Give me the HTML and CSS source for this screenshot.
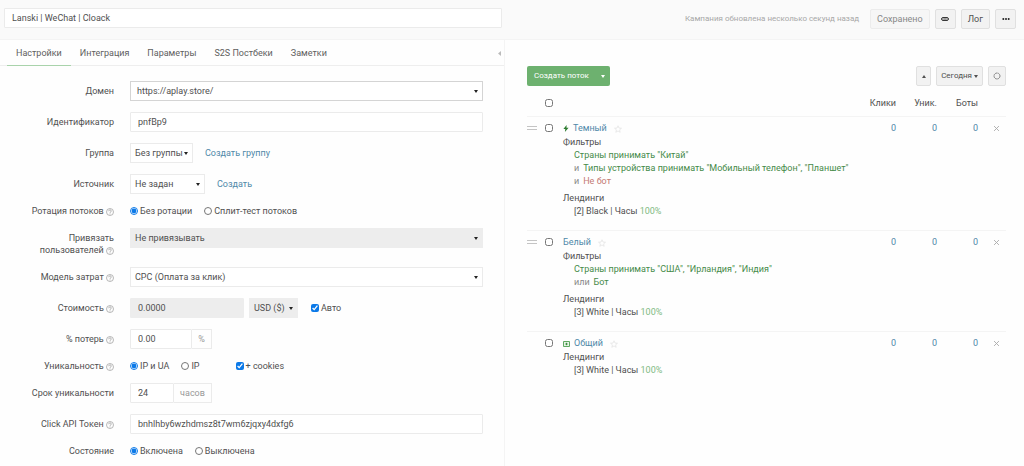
FILE: index.html
```html
<!DOCTYPE html>
<html lang="ru">
<head>
<meta charset="utf-8">
<meta name="viewport" content="width=device-width, initial-scale=1">
<title>Lanski | WeChat | Cloack</title>
<link rel="stylesheet" href="styles.css">
</head>
<body>
<svg class="sprite" aria-hidden="true">
  <symbol id="help" viewBox="0 0 16 16"><circle cx="8" cy="8" r="7" fill="none" stroke="currentColor" stroke-width="1.4"/><path d="M5.4 6.4c0-3.4 5.2-3.2 5.2-.3 0 1.6-2.6 1.8-2.6 3.6M8 11v1.8" fill="none" stroke="currentColor" stroke-width="1.6"/></symbol>
  <symbol id="star" viewBox="0 0 16 16"><path d="M8 1.5l2 4.6 5 .4-3.800 3.200 1.200 4.800L8 11.900l-4.400 2.600 1.200-4.800L1 6.500l5-.4z" fill="none" stroke="currentColor" stroke-width="1.2"/></symbol>
  <symbol id="close" viewBox="0 0 10 10"><path d="M1.500 1.500l7 7M8.500 1.500l-7 7" fill="none" stroke="currentColor" stroke-width="1.300"/></symbol>
  <symbol id="grip" viewBox="0 0 10 6"><path d="M0 1.500h10M0 4.500h10" stroke="currentColor" stroke-width="1"/></symbol>
</svg>

<header class="topbar">
  <input class="input topbar-name" type="text" aria-label="Название кампании" value="Lanski | WeChat | Cloack">
  <div class="topbar-actions">
    <span class="topbar-status">Кампания обновлена несколько секунд назад</span>
    <button class="btn btn-saved" type="button" disabled>Сохранено</button>
    <button class="btn btn-icon" type="button" aria-label="Ссылка"><svg width="8" height="4" viewBox="0 0 16 8"><rect x="1.200" y="1.200" width="13.600" height="5.600" rx="2.800" fill="none" stroke="currentColor" stroke-width="2"/><path d="M4.500 4h7" stroke="currentColor" stroke-width="1.400"/></svg></button>
    <button class="btn" type="button">Лог</button>
    <button class="btn btn-icon" type="button" aria-label="Ещё"><svg width="8" height="4" viewBox="0 0 8 4" fill="currentColor"><circle cx="1.300" cy="2" r="1"/><circle cx="4" cy="2" r="1"/><circle cx="6.700" cy="2" r="1"/></svg></button>
  </div>
</header>

<main class="columns">
  <section class="settings">
    <nav class="tabs">
      <a class="tab tab-active" href="#settings">Настройки</a>
      <a class="tab" href="#integration">Интеграция</a>
      <a class="tab" href="#params">Параметры</a>
      <a class="tab" href="#s2s">S2S Постбеки</a>
      <a class="tab" href="#notes">Заметки</a>
      <button class="collapse" type="button" aria-label="Свернуть"><svg width="3" height="5" viewBox="0 0 3 5"><path d="M3 0v5L0 2.500z" fill="currentColor"/></svg></button>
    </nav>

    <form class="form" id="settings">
      <div class="row">
        <label class="label" for="domain">Домен</label>
        <div class="field"><span class="select select-wide select-domain"><select id="domain"><option>https://aplay.store/</option></select></span></div>
      </div>
      <div class="row">
        <label class="label" for="alias">Идентификатор</label>
        <div class="field"><input class="input input-wide" id="alias" type="text" value="pnfBp9"></div>
      </div>
      <div class="row">
        <label class="label" for="group">Группа</label>
        <div class="field"><span class="select select-group"><select id="group"><option>Без группы</option></select></span><a class="link" href="#group">Создать группу</a></div>
      </div>
      <div class="row">
        <label class="label" for="source">Источник</label>
        <div class="field"><span class="select select-source"><select id="source"><option>Не задан</option></select></span><a class="link" href="#source">Создать</a></div>
      </div>
      <div class="row row-short" role="radiogroup" aria-labelledby="l-rotation">
        <span class="label" id="l-rotation">Ротация потоков <svg class="help"><use href="#help"/></svg></span>
        <div class="field"><label class="choice"><input type="radio" name="rotation" checked>Без ротации</label><label class="choice"><input type="radio" name="rotation">Сплит-тест потоков</label></div>
      </div>
      <div class="row">
        <label class="label" for="bind">Привязать пользователей <svg class="help"><use href="#help"/></svg></label>
        <div class="field"><span class="select select-wide select-muted"><select id="bind"><option>Не привязывать</option></select></span></div>
      </div>
      <div class="row">
        <label class="label" for="model">Модель затрат <svg class="help"><use href="#help"/></svg></label>
        <div class="field"><span class="select select-wide"><select id="model"><option>CPC (Оплата за клик)</option></select></span></div>
      </div>
      <div class="row">
        <label class="label" for="cost">Стоимость <svg class="help"><use href="#help"/></svg></label>
        <div class="field field-cost"><input class="input input-cost" id="cost" type="text" value="0.0000" readonly><span class="select select-muted select-currency"><select aria-label="Валюта"><option>USD ($)</option></select></span><label class="choice choice-auto"><input type="checkbox" checked>Авто</label></div>
      </div>
      <div class="row">
        <label class="label" for="loss">% потерь <svg class="help"><use href="#help"/></svg></label>
        <div class="field"><span class="group"><input class="input" id="loss" type="text" value="0.00"><span class="addon addon-percent">%</span></span></div>
      </div>
      <div class="row row-short" role="radiogroup" aria-labelledby="l-uniq">
        <span class="label" id="l-uniq">Уникальность <svg class="help"><use href="#help"/></svg></span>
        <div class="field"><label class="choice"><input type="radio" name="uniq" checked>IP и UA</label><label class="choice"><input type="radio" name="uniq">IP</label><label class="choice choice-cookies"><input type="checkbox" checked>+ cookies</label></div>
      </div>
      <div class="row">
        <label class="label" for="ttl">Срок уникальности</label>
        <div class="field"><span class="group"><input class="input" id="ttl" type="text" value="24"><span class="addon addon-hours">часов</span></span></div>
      </div>
      <div class="row">
        <label class="label" for="token">Click API Токен <svg class="help"><use href="#help"/></svg></label>
        <div class="field"><input class="input input-wide" id="token" type="text" value="bnhlhby6wzhdmsz8t7wm6zjqxy4dxfg6"></div>
      </div>
      <div class="row row-short" role="radiogroup" aria-labelledby="l-state">
        <span class="label" id="l-state">Состояние</span>
        <div class="field"><label class="choice"><input type="radio" name="state" checked>Включена</label><label class="choice"><input type="radio" name="state">Выключена</label></div>
      </div>
    </form>
  </section>

  <section class="streams">
    <div class="toolbar">
      <div class="split">
        <button class="split-main" type="button">Создать поток</button><button class="split-more" type="button" aria-label="Другие варианты"><span class="caret"></span></button>
      </div>
      <div class="toolbar-right">
        <button class="btn btn-small btn-up" type="button" aria-label="Свернуть потоки"><span class="caret caret-up"></span></button>
        <button class="btn btn-small btn-date" type="button">Сегодня<span class="caret"></span></button>
        <button class="btn btn-small btn-refresh" type="button" aria-label="Обновить"><svg width="8" height="8" viewBox="0 0 8 8"><circle cx="4" cy="4" r="3" fill="none" stroke="#888" stroke-dasharray="2 .36"/></svg></button>
      </div>
    </div>

    <table class="table">
      <thead>
        <tr><th class="c-grip"></th><th class="c-check"><input type="checkbox" aria-label="Выбрать все"></th><th></th><th class="c-num">Клики</th><th class="c-num">Уник.</th><th class="c-num">Боты</th><th class="c-close"></th></tr>
      </thead>
      <tbody>
        <tr>
          <td class="c-grip"><svg class="grip"><use href="#grip"/></svg></td>
          <td class="c-check"><input type="checkbox" aria-label="Темный"></td>
          <td>
            <div class="title"><svg class="bolt" width="6" height="7" viewBox="0 0 6 7"><path d="M3.600 0L.4 3.900h1.900L1.900 7l3.700-4.200H3.500z" fill="#2f7d32"/></svg><a href="#s1">Темный</a><svg class="star"><use href="#star"/></svg></div>
            <div>Фильтры</div>
            <div class="item green">Страны принимать "Китай"</div>
            <div class="item green"><span class="op">и</span>Типы устройства принимать "Мобильный телефон", "Планшет"</div>
            <div class="item red"><span class="op">и</span>Не бот</div>
            <div class="landings">Лендинги</div>
            <div class="item">[2] Black | Часы <span class="share">100%</span></div>
          </td>
          <td class="c-num"><a href="#s1">0</a></td><td class="c-num"><a href="#s1">0</a></td><td class="c-num"><a href="#s1">0</a></td>
          <td class="c-close"><button class="remove" type="button" aria-label="Удалить"><svg class="cross"><use href="#close"/></svg></button></td>
        </tr>
        <tr>
          <td class="c-grip"><svg class="grip"><use href="#grip"/></svg></td>
          <td class="c-check"><input type="checkbox" aria-label="Белый"></td>
          <td>
            <div class="title"><a href="#s2">Белый</a><svg class="star"><use href="#star"/></svg></div>
            <div>Фильтры</div>
            <div class="item green">Страны принимать "США", "Ирландия", "Индия"</div>
            <div class="item green"><span class="op">или</span>Бот</div>
            <div class="landings">Лендинги</div>
            <div class="item">[3] White | Часы <span class="share">100%</span></div>
          </td>
          <td class="c-num"><a href="#s2">0</a></td><td class="c-num"><a href="#s2">0</a></td><td class="c-num"><a href="#s2">0</a></td>
          <td class="c-close"><button class="remove" type="button" aria-label="Удалить"><svg class="cross"><use href="#close"/></svg></button></td>
        </tr>
        <tr>
          <td class="c-grip"></td>
          <td class="c-check"><input type="checkbox" aria-label="Общий"></td>
          <td>
            <div class="title"><svg class="default" width="7" height="6" viewBox="0 0 7 6"><path d="M.5.5h6v5h-6z" fill="#e4f3e4" stroke="#5fa862"/><path d="M2.300 3h2.400M3.500 1.800v2.400" stroke="#3f8f43"/></svg><a href="#s3">Общий</a><svg class="star"><use href="#star"/></svg></div>
            <div>Лендинги</div>
            <div class="item">[3] White | Часы <span class="share">100%</span></div>
          </td>
          <td class="c-num"><a href="#s3">0</a></td><td class="c-num"><a href="#s3">0</a></td><td class="c-num"><a href="#s3">0</a></td>
          <td class="c-close"><button class="remove" type="button" aria-label="Удалить"><svg class="cross"><use href="#close"/></svg></button></td>
        </tr>
      </tbody>
    </table>
  </section>
</main>
</body>
</html>
```
FILE: styles.css
```css
* { box-sizing: border-box; }

body {
  margin: 0;
  min-height: 100vh;
  display: flex;
  flex-direction: column;
  background: #fefefe;
  color: #505050;
  font: 9px/12px Roboto, "Liberation Sans", sans-serif;
}

a { color: #4f88a8; text-decoration: none; }
input, select, button { font: inherit; color: inherit; margin: 0; }
.sprite { display: none; }

.input {
  height: 20px;
  padding: 0 7px;
  border: 1px solid #ebebeb;
  border-radius: 1px;
  background: #fff;
  min-width: 0;
}

.caret {
  display: inline-block;
  border: 2px solid transparent;
  border-top: 3px solid currentColor;
  border-bottom: 0;
}
.caret-up { border-top: 0; border-bottom: 3px solid currentColor; }

.btn {
  display: inline-flex;
  align-items: center;
  justify-content: center;
  height: 20px;
  padding: 0 6px;
  border: 1px solid #e0e0e0;
  border-radius: 2px;
  background: #f2f2f2;
}

/* Top bar */
.topbar {
  display: grid;
  grid-template-columns: 498fr 514fr;
  align-items: center;
  height: 40px;
  padding: 0 8px 4px 4px;
  background: #fafafa;
  border-bottom: 1px solid #f4f4f4;
}
.topbar-actions { display: flex; align-items: center; justify-content: flex-end; gap: 5px; padding-top: 2px; }
.topbar-status { margin-right: 6px; color: #a8a8a8; font-size: 8px; }
.btn-saved { background: #f6f6f6; border-color: #ececec; color: #888; }
.btn-icon { width: 21px; padding: 0; color: #222; }

.columns { flex: 1; display: grid; grid-template-columns: 505fr 519fr; }

/* Settings */
.settings { border-right: 1px solid #f4f4f4; }
.tabs {
  display: flex;
  height: 26px;
  padding-left: 7px;
  border-bottom: 1px solid #eee;
}
.tab { display: flex; align-items: center; padding: 1px 9px 0; margin-bottom: -1px; color: #606060; border-bottom: 1px solid transparent; }
.tab-active { border-bottom-color: #a9d3ab; }
.collapse { margin-left: auto; padding: 0 3px; border: 0; background: none; color: #bbb; line-height: 6px; }

.form { display: flex; flex-direction: column; gap: 11px; padding: 15px 21px 9px 0; }
.row { display: grid; grid-template-columns: 114px 1fr; column-gap: 16px; }
.label { padding: 4px 0 0 24px; text-align: right; }
.row-short .label { padding-top: 0; }
.help { width: 8px; height: 8px; vertical-align: -2px; color: #999; }
.field { display: flex; align-items: center; align-self: start; min-height: 20px; }
.row-short .field { min-height: 12px; }
.input-wide, .select-wide { flex: 1; }
.link { margin-left: 12px; }

.select { position: relative; display: flex; height: 20px; border: 1px solid #ebebeb; background: #fff; }
.select select { appearance: none; width: 100%; padding: 0 9px 0 4px; border: 0; border-radius: 0; background: none; }
.select::after {
  content: "";
  position: absolute;
  right: 4px;
  top: 8px;
  border: 2px solid transparent;
  border-top: 3px solid #222;
  border-bottom: 0;
  pointer-events: none;
}
.select-domain { border-color: #d4d4d4; }
.select-domain select { padding-left: 6px; }
.select-muted, .input-cost { background: #ededed; border-color: #ededed; }
.select-group { width: 63px; }
.select-group select { padding-right: 0; }
.select-source { width: 75px; }
.select-currency { width: 49px; }
.input-cost { width: 114px; }
.field-cost { gap: 5px; }

.choice { display: inline-flex; align-items: center; gap: 2px; margin-right: 12px; }
.choice input { width: 8px; height: 8px; accent-color: #0b79e8; }
.choice-auto { margin-left: 8px; }
.choice-cookies { margin-left: 24px; }

.group { display: flex; width: 82px; }
.group .input { flex: 1; width: 0; }
.addon { display: flex; align-items: center; justify-content: center; border: 1px solid #ebebeb; border-left: 0; color: #999; }
.addon-percent { width: 20px; }
.addon-hours { width: 38px; }

/* Streams */
.streams { padding: 26px 18px 0 22px; }
.toolbar { display: flex; justify-content: space-between; }
.split { display: flex; height: 20px; border-radius: 2px; background: #6db16f; color: #fff; }
.split button { border: 0; background: none; font-size: 8px; }
.split-main { padding: 0 7px; }
.split-more { display: flex; align-items: center; padding: 0 5px; }
.toolbar-right { display: flex; gap: 5px; }
.btn-small { font-size: 8px; padding: 0 4px; gap: 2px; }
.btn-up { width: 15px; }
.btn-refresh { width: 18px; }

.table { width: 100%; margin-top: 4px; border-collapse: collapse; }
.table th { height: 26px; padding: 0; font-weight: 400; text-align: left; }
.table td { padding: 5px 0 12px; vertical-align: top; line-height: 13px; }
.table thead tr, .table tbody tr:not(:last-child) { border-bottom: 1px solid #f4f4f4; }
.table .c-num { width: 41px; text-align: right; }
.table .c-grip, .table .c-check { width: 18px; }
.table .c-close { width: 28px; padding-left: 15px; }
.c-check input { display: block; width: 8px; height: 8px; }
td.c-check input { margin-top: 2px; }
.grip { display: block; width: 10px; height: 6px; margin-top: 3px; color: #c4c4c4; }
.remove { display: block; padding: 3px 0 0; border: 0; background: none; }
.cross { display: block; width: 7px; height: 7px; color: #aaa; }
.title { display: flex; align-items: center; height: 14px; }
.bolt { margin-right: 4px; }
.default { margin-right: 4px; }
.star { width: 8px; height: 8px; margin-left: 7px; color: #ddd; }
.item { padding-left: 11px; }
.landings { margin-top: 4px; }
.op { margin-right: 4px; color: #888; }
.green { color: #458a48; }
.red { color: #c47a74; }
.share { color: #7fba82; }
```
